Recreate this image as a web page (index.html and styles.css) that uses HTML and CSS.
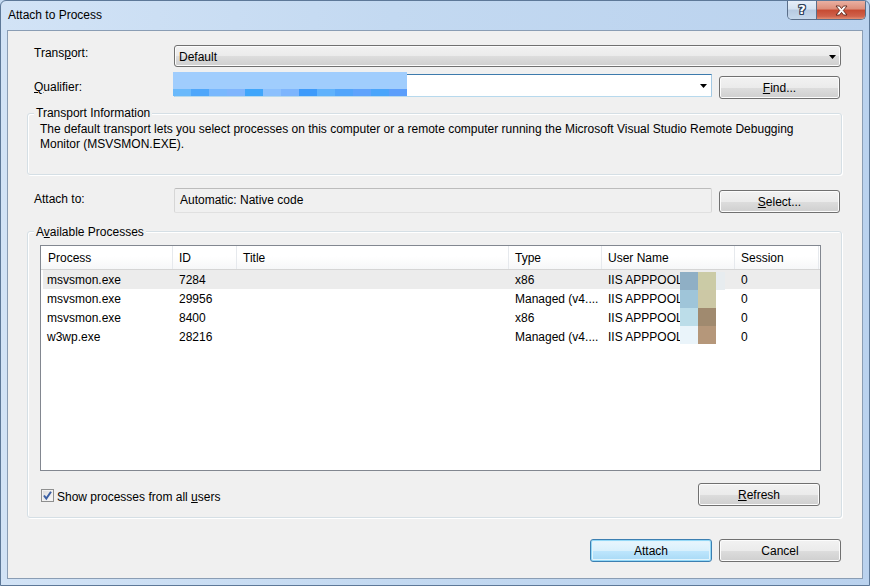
FILE: index.html
```html
<!DOCTYPE html>
<html lang="en">
<head>
    <meta charset="UTF-8">
    <meta name="viewport" content="width=device-width, initial-scale=1.0">
    <title>Attach to Process</title>
    <link rel="stylesheet" href="styles.css">
</head>
<body>

<div class="window">

    <!-- Title bar -->
    <div class="titlebar">
        <span class="title">Attach to Process</span>
        <div class="caption-btns">
            <div class="cap-help"><span>?</span></div>
            <div class="cap-close">
                <svg width="13" height="11" viewBox="0 0 13 11">
                    <path d="M1 1 H4.5 L6.5 3.6 L8.5 1 H12 L8.3 5.5 L12 10 H8.5 L6.5 7.4 L4.5 10 H1 L4.7 5.5 Z" fill="#fff" stroke="#5b2418" stroke-width="0.9" stroke-linejoin="round"/>
                </svg>
            </div>
        </div>
    </div>

    <div class="client">

        <div class="form-row">
            <label class="field-label label-transport">Trans<u>p</u>ort:</label>
            <div class="combo">
                <span>Default</span>
                <svg class="arrow" width="7" height="4" viewBox="0 0 7 4"><polygon points="0,0 7,0 3.5,4" fill="#000"/></svg>
            </div>
        </div>

        <div class="form-row row-qualifier">
            <label class="field-label label-qualifier"><u>Q</u>ualifier:</label>
            <div class="combo-edit">
                <!-- pixelated redaction over the machine name -->
                <div class="redact-q">
                    <div class="redact-q-top"></div>
                    <div class="redact-q-strip">
                        <span style="background:#6ab9fb"></span>
                        <span style="background:#4fa7fb"></span>
                        <span style="background:#79b8fd"></span>
                        <span style="background:#7fb5fd"></span>
                        <span style="background:#40a6fb"></span>
                        <span style="background:#8cc0fd"></span>
                        <span style="background:#7db5fd"></span>
                        <span style="background:#3e9bfb"></span>
                        <span style="background:#60b2fc"></span>
                        <span style="background:#52a5fb"></span>
                        <span style="background:#5fa3fc"></span>
                        <span style="background:#4aa5fb"></span>
                        <span style="background:#5c9efb"></span>
                    </div>
                </div>
                <svg class="arrow" width="7" height="4" viewBox="0 0 7 4"><polygon points="0,0 7,0 3.5,4" fill="#000"/></svg>
            </div>
            <button class="btn btn-side"><u>F</u>ind...</button>
        </div>

        <div class="group group-info">
            <span class="group-caption">Transport Information</span>
            <p class="info-text">The default transport lets you select processes on this computer or a remote computer running the Microsoft Visual Studio Remote Debugging Monitor (MSVSMON.EXE).</p>
        </div>

        <div class="form-row row-attach">
            <label class="field-label label-attach">Attach to:</label>
            <div class="textbox">Automatic: Native code</div>
            <button class="btn btn-side"><u>S</u>elect...</button>
        </div>

        <div class="group group-processes">
            <span class="group-caption">A<u>v</u>ailable Processes</span>

            <div class="list">
                <div class="list-header">
                    <div class="col col-process">Process</div>
                    <div class="col">ID</div>
                    <div class="col">Title</div>
                    <div class="col">Type</div>
                    <div class="col">User Name</div>
                    <div class="col">Session</div>
                </div>
                <div class="list-row selected">
                    <div class="cell col-process">msvsmon.exe</div>
                    <div class="cell">7284</div>
                    <div class="cell"></div>
                    <div class="cell">x86</div>
                    <div class="cell">IIS APPPOOL\</div>
                    <div class="cell">0</div>
                </div>
                <div class="list-row">
                    <div class="cell col-process">msvsmon.exe</div>
                    <div class="cell">29956</div>
                    <div class="cell"></div>
                    <div class="cell">Managed (v4....</div>
                    <div class="cell">IIS APPPOOL\</div>
                    <div class="cell">0</div>
                </div>
                <div class="list-row">
                    <div class="cell col-process">msvsmon.exe</div>
                    <div class="cell">8400</div>
                    <div class="cell"></div>
                    <div class="cell">x86</div>
                    <div class="cell">IIS APPPOOL\</div>
                    <div class="cell">0</div>
                </div>
                <div class="list-row">
                    <div class="cell col-process">w3wp.exe</div>
                    <div class="cell">28216</div>
                    <div class="cell"></div>
                    <div class="cell">Managed (v4....</div>
                    <div class="cell">IIS APPPOOL\</div>
                    <div class="cell">0</div>
                </div>

                <!-- pixelated redaction over the user names -->
                <div class="redact-user">
                    <div class="redact-row">
                        <span style="background:#8fafc5"></span>
                        <span style="background:#cbcba6"></span>
                        <span class="redact-thin" style="background:#e7ecef"></span>
                    </div>
                    <div class="redact-row">
                        <span style="background:#9fc5d9"></span>
                        <span style="background:#ccc8a5"></span>
                    </div>
                    <div class="redact-row">
                        <span style="background:#bcdde9"></span>
                        <span style="background:#a08a6f"></span>
                    </div>
                    <div class="redact-row">
                        <span style="background:#eaf4fa"></span>
                        <span style="background:#b5977a"></span>
                    </div>
                </div>
            </div>

            <div class="list-footer">
                <label class="check">
                    <span class="checkbox">
                        <svg width="11" height="11" viewBox="0 0 11 11">
                            <path d="M2 5.5 L4.3 8.5 L9 1.8" fill="none" stroke="#3b5fa3" stroke-width="2"/>
                        </svg>
                    </span>
                    <span class="check-text">Show processes from all <u>u</u>sers</span>
                </label>
                <button class="btn btn-refresh"><u>R</u>efresh</button>
            </div>
        </div>

        <div class="dialog-buttons">
            <button class="btn btn-default">Attach</button>
            <button class="btn">Cancel</button>
        </div>

    </div>
</div>

</body>
</html>
```

FILE: styles.css
```css
/* General page */
body {
    margin: 0;
    font-family: "Liberation Sans", Arial, sans-serif;
    font-size: 12px;
    color: #000;
    background: #c4daf2;
}

u {
    text-underline-offset: 1px;
}

/* Aero window frame */
.window {
    width: 870px;
    height: 586px;
    box-sizing: border-box;
    border: 1px solid #5d7898;
    border-radius: 6px 6px 0 0;
    background: linear-gradient(to right, #d2e3f6, #c3d9f1 45%, #bad2ee);
    display: flex;
    flex-direction: column;
    overflow: hidden;
}

.titlebar {
    height: 29px;
    flex-shrink: 0;
    display: flex;
    align-items: flex-start;
    padding-left: 7px;
}

.title {
    margin-top: 6px;
    line-height: 16px;
}

.caption-btns {
    margin-left: auto;
    margin-right: 3px;
    display: flex;
    height: 18px;
    border: 1px solid #5a6e89;
    border-top: none;
    border-radius: 0 0 5px 5px;
    overflow: hidden;
}

.cap-help {
    width: 28px;
    border-right: 1px solid #5a6e89;
    background: linear-gradient(#e6eef8 0%, #d4e2f1 45%, #b7cae1 50%, #c6d8ec 100%);
    display: flex;
    align-items: center;
    justify-content: center;
}

.cap-help span {
    font-family: "DejaVu Sans", sans-serif;
    font-weight: bold;
    font-size: 13px;
    line-height: 14px;
    color: #fff;
    text-shadow: 1px 0 0 #2f425a, -1px 0 0 #2f425a, 0 1px 0 #2f425a, 0 -1px 0 #2f425a,
                 1px 1px 0 #2f425a, -1px -1px 0 #2f425a, 1px -1px 0 #2f425a, -1px 1px 0 #2f425a;
}

.cap-close {
    width: 48px;
    background: linear-gradient(#eab0a2 0%, #dd8d79 45%, #c64a32 50%, #cf624c 85%, #e38f73 100%);
    display: flex;
    align-items: center;
    justify-content: center;
}

/* Dialog client area */
.client {
    margin: 0 6px;
    height: 549px;
    box-sizing: border-box;
    flex-shrink: 0;
    background: #f0f0f0;
    border: 1px solid #8a9db4;
    padding: 14px 20px 0 19px;
}

.form-row {
    display: flex;
    align-items: flex-start;
}

.field-label {
    width: 140px;
    margin-left: 7px;
    line-height: 15px;
    flex-shrink: 0;
}

.label-transport {
    margin-top: 1px;
}

.label-qualifier {
    margin-top: 6px;
}

.label-attach {
    margin-top: 4px;
}

.row-qualifier {
    margin-top: 7px;
}

.row-attach {
    margin-top: 13px;
}

/* Buttons */
.btn {
    box-sizing: border-box;
    width: 122px;
    height: 23px;
    padding: 0;
    border: 1px solid #707070;
    border-radius: 3px;
    background: linear-gradient(#f2f2f2 0%, #ebebeb 50%, #dddddd 51%, #cfcfcf 100%);
    box-shadow: inset 0 0 0 1px #fcfcfc;
    font: inherit;
    color: #000;
    display: flex;
    align-items: center;
    justify-content: center;
}

.btn-side {
    width: 121px;
    margin-left: 7px;
    margin-top: 2px;
}

.btn-default {
    border-color: #3c7fb1;
    background: linear-gradient(#eaf6fd 0%, #d9f0fc 50%, #bee6fd 51%, #a7d9f5 100%);
    box-shadow: inset 0 0 0 1px #93d8f7, inset 0 0 0 2px #e2f4fc;
}

/* Drop-down list (non editable) */
.combo {
    flex: 1;
    margin-right: 1px;
    height: 22px;
    box-sizing: border-box;
    border: 1px solid #707070;
    border-radius: 3px;
    background: linear-gradient(#f2f2f2 0%, #ebebeb 50%, #dddddd 51%, #cfcfcf 100%);
    box-shadow: inset 0 0 0 1px #fcfcfc;
    display: flex;
    align-items: center;
    justify-content: space-between;
    padding: 1px 4px 0 4px;
}

/* Editable combo box */
.combo-edit {
    position: relative;
    width: 538px;
    height: 23px;
    box-sizing: border-box;
    background: #fff;
    border: 1px solid;
    border-color: #3d7bad #a4c9e3 #b7d9ed #a4c9e3;
    display: flex;
    align-items: center;
    justify-content: flex-end;
    padding-right: 4px;
}

.redact-q {
    position: absolute;
    left: -2px;
    top: -3px;
    width: 234px;
    height: 24px;
    display: flex;
    flex-direction: column;
}

.redact-q-top {
    height: 17px;
    background: #a0cdfd;
}

.redact-q-strip {
    height: 7px;
    display: flex;
}

.redact-q-strip span {
    width: 18px;
}

/* Read only text box */
.textbox {
    width: 538px;
    height: 25px;
    box-sizing: border-box;
    border: 1px solid;
    border-color: #bcbcbc #d6d6d6 #e0e0e0 #d6d6d6;
    border-radius: 2px;
    background: #f0f0f0;
    padding-left: 5px;
    line-height: 22px;
}

/* Group boxes */
.group {
    position: relative;
    box-sizing: border-box;
    border: 1px solid #d5dfe5;
    border-radius: 3px;
    box-shadow: inset 1px 1px 0 #fff, 1px 1px 0 #fff;
}

.group-caption {
    position: absolute;
    top: -8px;
    left: 6px;
    padding: 0 2px;
    line-height: 15px;
    background: #f0f0f0;
}

.group-info {
    margin-top: 14px;
    height: 62px;
    padding: 8px 12px 0 12px;
}

.info-text {
    margin: 0;
    line-height: 15px;
}

.group-processes {
    margin-top: 18px;
    height: 287px;
    padding: 13px 0 0 12px;
}

.group-processes .group-caption {
    top: -7px;
}

/* Process list view */
.list {
    position: relative;
    width: 781px;
    height: 226px;
    box-sizing: border-box;
    border: 1px solid #828790;
    background: #fff;
}

.list-header,
.list-row {
    display: grid;
    grid-template-columns: 132px 64px 272px 93px 133px 84px;
}

.list-header {
    height: 24px;
    box-sizing: border-box;
    border-bottom: 1px solid #d5d5d5;
    background: linear-gradient(#ffffff 0%, #ffffff 45%, #f6f7f8 100%);
}

.col {
    border-right: 1px solid #e6e9ed;
    padding-left: 6px;
    padding-top: 2px;
    line-height: 21px;
}

.col-process {
    padding-left: 7px;
}

.list-row {
    height: 19px;
    line-height: 17px;
}

.cell {
    padding-left: 6px;
    padding-top: 2px;
    white-space: nowrap;
    overflow: hidden;
}

.list-row.selected {
    background: #ececec;
    box-shadow: inset 2px 0 0 #fff;
}

.redact-user {
    position: absolute;
    left: 639px;
    top: 26px;
}

.redact-row {
    display: flex;
    height: 18px;
}

.redact-row span {
    width: 18px;
}

.redact-row span.redact-thin {
    width: 9px;
}

/* Checkbox and refresh */
.list-footer {
    width: 781px;
    margin-top: 12px;
    display: flex;
    align-items: center;
    justify-content: space-between;
}

.check {
    display: flex;
    align-items: center;
    margin-left: 1px;
    margin-top: 2px;
}

.check-text {
    padding-top: 2px;
}

.checkbox {
    width: 13px;
    height: 13px;
    box-sizing: border-box;
    border: 1px solid #8e8f8f;
    background: linear-gradient(135deg, #dadada, #fbfbfb);
    box-shadow: inset 0 0 0 1px #f2f2f2;
    display: flex;
    align-items: center;
    justify-content: center;
    margin-right: 3px;
}

.btn-refresh {
    margin-right: 1px;
}

/* OK / Cancel */
.dialog-buttons {
    margin-top: 21px;
    margin-right: 1px;
    display: flex;
    justify-content: flex-end;
    gap: 7px;
}
```
